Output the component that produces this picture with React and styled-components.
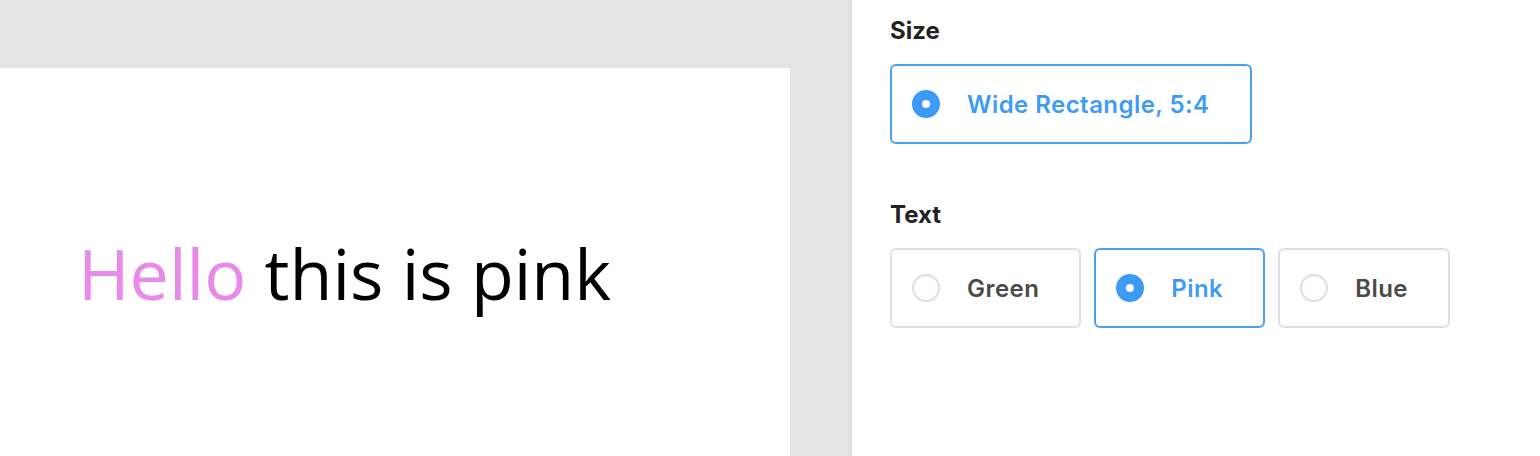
import React, { useState } from "react";
import styled, { createGlobalStyle } from "styled-components";

const GlobalStyle = createGlobalStyle`
  html, body {
    margin: 0;
    padding: 0;
    background: #ffffff;
    overflow: hidden;
  }
  * { box-sizing: border-box; }
`;

const Layout = styled.div`
  display: flex;
  width: 1540px;
  height: 456px;
  overflow: hidden;
`;

const Stage = styled.div`
  flex: 0 0 849px;
  background: #e4e4e4;
  padding-top: 68px;
  overflow: hidden;
`;

const Canvas = styled.div`
  width: 790px;
  height: 632px;
  background: #ffffff;
  padding: 170px 0 0 78px;
`;

const Headline = styled.h1`
  margin: 0;
  font-family: "Open Sans", sans-serif;
  font-weight: 400;
  font-size: 70px;
  line-height: 70px;
  color: #000000;
  white-space: nowrap;
`;

const Accent = styled.span`
  color: ${(p) => p.$color};
`;

const Panel = styled.aside`
  flex: 1;
  border-left: 3px solid #dcdfe2;
  padding: 17px 0 0 38px;
  font-family: "Inter", sans-serif;
  display: flex;
  flex-direction: column;
  gap: 57px;
`;

const Section = styled.section`
  display: flex;
  flex-direction: column;
  gap: 19px;
`;

const Label = styled.div`
  font-size: 24px;
  line-height: 28px;
  font-weight: 700;
  color: #222222;
`;

const Options = styled.div`
  display: flex;
  gap: 13px;
`;

const Card = styled.button`
  display: flex;
  align-items: center;
  height: 80px;
  padding: 0 40px 0 20px;
  background: #ffffff;
  border: 2px solid ${(p) => (p.$active ? "#4aa0f5" : "#dde1e5")};
  border-radius: 6px;
  font-family: inherit;
  font-size: 24px;
  letter-spacing: 0.45px;
  font-weight: 600;
  color: ${(p) => (p.$active ? "#3d9bf5" : "#4a4a4a")};
  cursor: pointer;
`;

const Radio = styled.span`
  flex: 0 0 28px;
  width: 28px;
  height: 28px;
  border-radius: 50%;
  margin-right: 27px;
  display: flex;
  align-items: center;
  justify-content: center;
  background: ${(p) => (p.$active ? "#3d9bf5" : "#ffffff")};
  border: 2px solid ${(p) => (p.$active ? "#3d9bf5" : "#d9dfe4")};

  &::after {
    content: "";
    width: 8px;
    height: 8px;
    border-radius: 50%;
    background: #ffffff;
    display: ${(p) => (p.$active ? "block" : "none")};
  }
`;

const colors = {
  Green: "#4caf50",
  Pink: "#e88ae9",
  Blue: "#3d9bf5",
};

export default function App() {
  const [color, setColor] = useState("Pink");
  return (
    <>
      <GlobalStyle />
      <Layout>
        <Stage>
          <Canvas>
            <Headline>
              <Accent $color={colors[color]}>Hello</Accent> this is {color.toLowerCase()}
            </Headline>
          </Canvas>
        </Stage>
        <Panel>
          <Section>
            <Label>Size</Label>
            <Options>
              <Card $active>
                <Radio $active />
                Wide Rectangle, 5:4
              </Card>
            </Options>
          </Section>
          <Section>
            <Label>Text</Label>
            <Options>
              {Object.keys(colors).map((name) => (
                <Card key={name} $active={name === color} onClick={() => setColor(name)}>
                  <Radio $active={name === color} />
                  {name}
                </Card>
              ))}
            </Options>
          </Section>
        </Panel>
      </Layout>
    </>
  );
}
